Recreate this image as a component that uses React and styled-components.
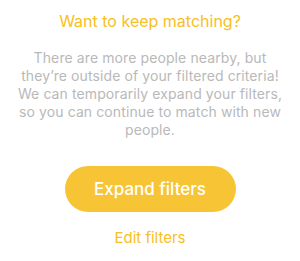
import React from "react";
import styled, { createGlobalStyle } from "styled-components";

const Global = createGlobalStyle`
  html, body { margin: 0; padding: 0; background: #ffffff; }
  body { font-family: Inter, "Open Sans", sans-serif; -webkit-font-smoothing: antialiased; }
`;

const Screen = styled.div`
  width: 300px;
  height: 261px;
  display: flex;
  flex-direction: column;
  align-items: center;
  box-sizing: border-box;
  padding-top: 10px;
  background: #fff;
`;

const Title = styled.h1`
  margin: 0;
  font-size: 16px;
  font-weight: 400;
  line-height: 22px;
  color: #f7c024;
  text-align: center;
`;

const Body = styled.p`
  margin: 17px 0 0;
  width: 276px;
  font-size: 14px;
  letter-spacing: 0.1px;
  line-height: 18px;
  color: #b9b9b9;
  text-align: center;
`;

const PrimaryButton = styled.button`
  margin-top: 27px;
  width: 171px;
  height: 46px;
  border: none;
  border-radius: 23px;
  background: #f7c435;
  color: #ffffff;
  font-family: inherit;
  font-size: 17px;
  font-weight: 500;
  cursor: pointer;
`;

const LinkButton = styled.button`
  margin-top: 17px;
  border: none;
  background: none;
  padding: 0;
  color: #f7c024;
  font-family: inherit;
  font-size: 15px;
  line-height: 18px;
  cursor: pointer;
`;

export default function App() {
  return (
    <>
      <Global />
      <Screen>
        <Title>Want to keep matching?</Title>
        <Body>
          There are more people nearby, but they’re outside of your filtered
          criteria! We can temporarily expand your filters, so you can continue
          to match with new people.
        </Body>
        <PrimaryButton>Expand filters</PrimaryButton>
        <LinkButton>Edit filters</LinkButton>
      </Screen>
    </>
  );
}
